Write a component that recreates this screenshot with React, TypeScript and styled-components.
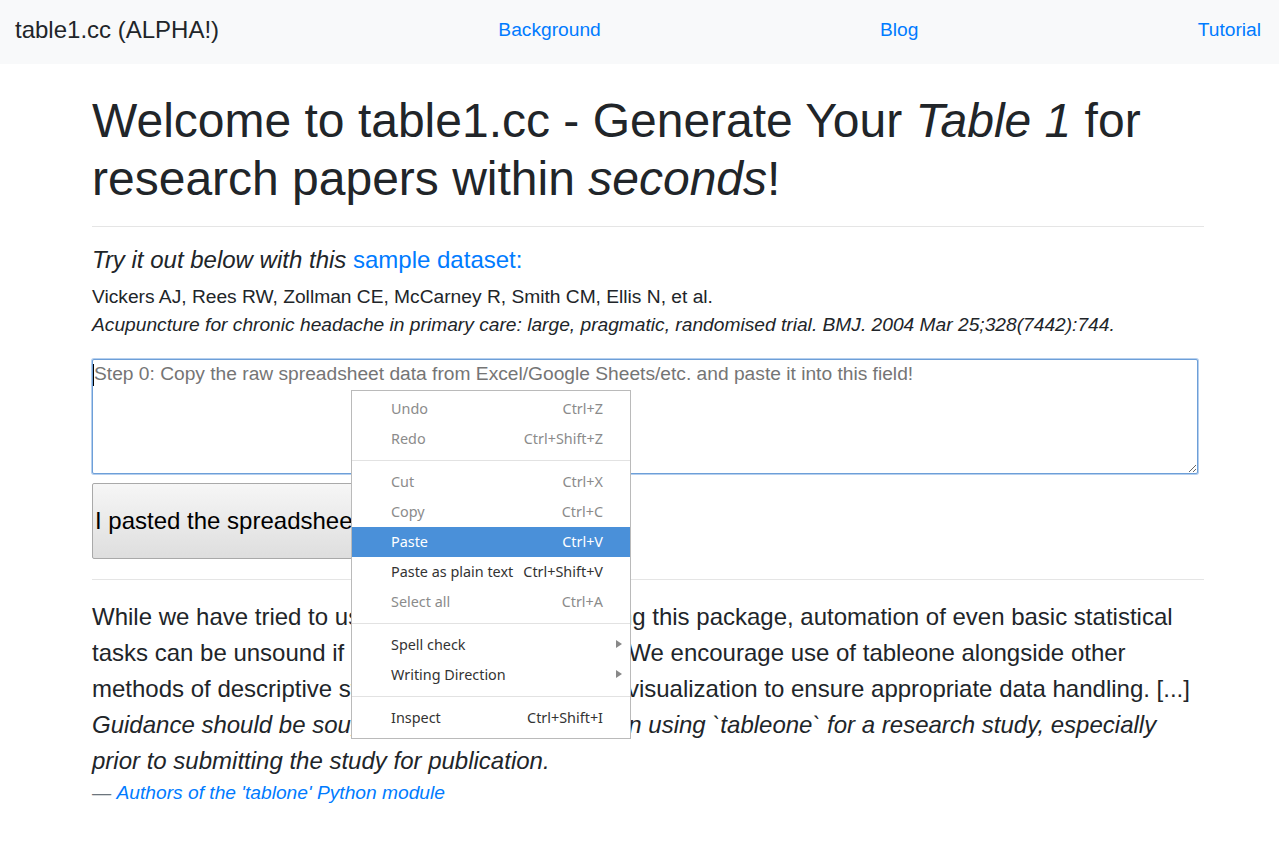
import * as React from 'react';
import styled, { createGlobalStyle } from 'styled-components';

const GlobalStyle = createGlobalStyle`
  html, body {
    margin: 0;
    padding: 0;
    background: #fff;
  }
  body {
    font-family: 'Liberation Sans', Arial, sans-serif;
    color: #212529;
  }
`;

type Item = {
  label?: string;
  shortcut?: string;
  disabled?: boolean;
  active?: boolean;
  submenu?: boolean;
  separator?: boolean;
};

const menuItems: Item[] = [
  { label: 'Undo', shortcut: 'Ctrl+Z', disabled: true },
  { label: 'Redo', shortcut: 'Ctrl+Shift+Z', disabled: true },
  { separator: true },
  { label: 'Cut', shortcut: 'Ctrl+X', disabled: true },
  { label: 'Copy', shortcut: 'Ctrl+C', disabled: true },
  { label: 'Paste', shortcut: 'Ctrl+V', active: true },
  { label: 'Paste as plain text', shortcut: 'Ctrl+Shift+V' },
  { label: 'Select all', shortcut: 'Ctrl+A', disabled: true },
  { separator: true },
  { label: 'Spell check', submenu: true },
  { label: 'Writing Direction', submenu: true },
  { separator: true },
  { label: 'Inspect', shortcut: 'Ctrl+Shift+I' },
];

export default function App() {
  return (
    <>
      <GlobalStyle />
      <Navbar>
        <Brand>table1.cc (ALPHA!)</Brand>
        <NavLink href="#">Background</NavLink>
        <NavLink href="#">Blog</NavLink>
        <NavLink href="#">Tutorial</NavLink>
      </Navbar>
      <Main>
        <Title>
          Welcome to table1.cc - Generate Your <em>Table 1</em> for research
          papers within <em>seconds</em>!
        </Title>
        <Rule $top={19} $bottom={19} />
        <Lead>
          <em>Try it out below with this </em>
          <Link href="#">sample dataset:</Link>
        </Lead>
        <Citation>
          Vickers AJ, Rees RW, Zollman CE, McCarney R, Smith CM, Ellis N, et al.
          <br />
          <em>
            Acupuncture for chronic headache in primary care: large, pragmatic,
            randomised trial. BMJ. 2004 Mar 25;328(7442):744.
          </em>
        </Citation>
        <Field>
          <PasteField placeholder="Step 0: Copy the raw spreadsheet data from Excel/Google Sheets/etc. and paste it into this field!" />
          <Caret />
        </Field>
        <SubmitButton>I pasted the spreadsheet data!</SubmitButton>
        <Rule $top={20} $bottom={19} />
        <Quote>
          While we have tried to use best practices in creating this package,
          automation of even basic statistical tasks can be unsound if done
          without supervision. We encourage use of tableone alongside other
          methods of descriptive statistics and, in particular, visualization to
          ensure appropriate data handling. [...]{' '}
          <em>
            Guidance should be sought from a statistician when using `tableone`
            for a research study, especially prior to submitting the study for
            publication.
          </em>
        </Quote>
        <QuoteFooter>
          — <Link href="#"><em>Authors of the 'tablone' Python module</em></Link>
        </QuoteFooter>
      </Main>

      <ContextMenu>
        {menuItems.map((item, i) =>
          item.separator ? (
            <Separator key={i} />
          ) : (
            <MenuRow key={i} $disabled={item.disabled} $active={item.active}>
              <span>{item.label}</span>
              {item.shortcut && <span>{item.shortcut}</span>}
              {item.submenu && <Arrow />}
            </MenuRow>
          )
        )}
      </ContextMenu>
    </>
  );
}

const Navbar = styled.nav`
  display: flex;
  align-items: center;
  justify-content: space-between;
  box-sizing: border-box;
  height: 64px;
  padding: 0 18px 4px 15px;
  background: #f8f9fa;
`;

const Brand = styled.span`
  font-size: 24px;
  color: #212529;
  line-height: 1;
`;

const NavLink = styled.a`
  font-size: 19.2px;
  color: #007bff;
  text-decoration: none;
`;

const Main = styled.main`
  width: 1112px;
  margin-left: 92px;
  padding-top: 28px;
`;

const Title = styled.h1`
  margin: 0;
  font-size: 48px;
  font-weight: 400;
  line-height: 1.2;
  color: #212529;
`;

const Rule = styled.hr<{ $top: number; $bottom: number }>`
  margin: ${(p) => p.$top}px 0 ${(p) => p.$bottom}px;
  border: 0;
  border-top: 1px solid #e5e5e5;
`;

const Lead = styled.p`
  margin: 0 0 8px;
  font-size: 24px;
  line-height: 1.2;
`;

const Link = styled.a`
  color: #007bff;
  text-decoration: none;
`;

const Citation = styled.p`
  margin: 0 0 20px;
  font-size: 19.2px;
  line-height: 28px;
`;

const Field = styled.div`
  position: relative;
  width: 1106px;
  margin: 0 0 9px;
`;

const PasteField = styled.textarea`
  display: block;
  box-sizing: border-box;
  width: 100%;
  height: 115px;
  margin: 0;
  padding: 3px 1px;
  font-family: 'Liberation Sans', Arial, sans-serif;
  font-size: 19.2px;
  color: #212529;
  border: 1px solid #6d9fd8;
  border-radius: 2px;
  box-shadow: 0 0 0 1px #b5cfee;
  outline: none;
  resize: both;

  &::placeholder {
    color: #757575;
  }
`;

const Caret = styled.span`
  position: absolute;
  left: 1px;
  top: 5px;
  width: 1px;
  height: 22px;
  background: #000;
`;

const SubmitButton = styled.button`
  display: block;
  box-sizing: border-box;
  height: 76px;
  padding: 0 2px;
  font-family: 'Liberation Sans', Arial, sans-serif;
  font-size: 24px;
  color: #000;
  border: 1px solid #a9a9a9;
  border-radius: 2px;
  background: linear-gradient(#f6f6f6, #dedede);
`;

const Quote = styled.p`
  margin: 0;
  font-size: 24px;
  line-height: 36px;
`;

const QuoteFooter = styled.p`
  margin: 0;
  font-size: 19.2px;
  line-height: 28px;
  color: #6c757d;
`;

const ContextMenu = styled.div`
  position: absolute;
  left: 351px;
  top: 390px;
  box-sizing: border-box;
  width: 280px;
  padding: 3px 0 5px;
  background: #fff;
  border: 1px solid #bababa;
  font-family: 'Noto Sans', 'Open Sans', sans-serif;
  font-size: 14.4px;
`;

const MenuRow = styled.div<{ $disabled?: boolean; $active?: boolean }>`
  position: relative;
  display: flex;
  align-items: center;
  justify-content: space-between;
  box-sizing: border-box;
  height: 30px;
  padding: 0 27px 1px 39px;
  color: ${(p) => (p.$active ? '#fff' : p.$disabled ? '#8b8b8b' : '#333')};
  background: ${(p) => (p.$active ? '#4a90d9' : 'transparent')};
`;

const Separator = styled.div`
  height: 1px;
  margin: 6px 0;
  background: #e2e2e2;
`;

const Arrow = styled.span`
  position: absolute;
  right: 8px;
  top: 10px;
  width: 0;
  height: 0;
  border-top: 4px solid transparent;
  border-bottom: 4px solid transparent;
  border-left: 6px solid #888;
`;
